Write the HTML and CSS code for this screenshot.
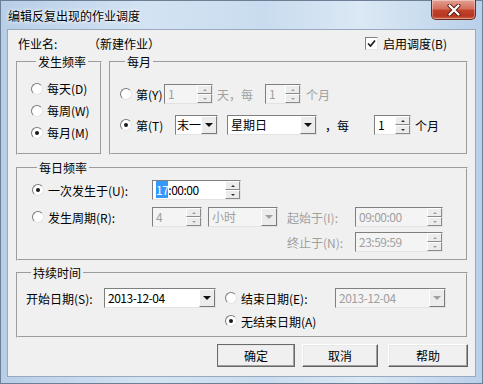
FILE: index.html
```html
<!DOCTYPE html>
<html lang="zh-CN">
<head>
    <meta charset="UTF-8">
    <meta name="viewport" content="width=device-width, initial-scale=1.0">
    <title>编辑反复出现的作业调度</title>
    <link rel="stylesheet" href="styles.css">
</head>
<body>
    <div class="window">
        <div class="titlebar">
            <span class="title">编辑反复出现的作业调度</span>
            <div class="close-btn">
                <svg width="14" height="12" viewBox="0 0 14 12">
                    <path d="M2.5 1.5 L11.5 10.5 M11.5 1.5 L2.5 10.5" stroke="#5a1d14" stroke-width="4" stroke-linecap="round"/>
                    <path d="M2.5 1.5 L11.5 10.5 M11.5 1.5 L2.5 10.5" stroke="#ffffff" stroke-width="2.2" stroke-linecap="round"/>
                </svg>
            </div>
        </div>

        <div class="client">
            <div class="job-row">
                <span class="job-label">作业名:</span>
                <span class="job-name">（新建作业）</span>
                <span class="checkbox">
                    <svg width="11" height="11" viewBox="0 0 11 11"><path d="M2 5.5 L4.5 8 L9 2.5" fill="none" stroke="#1c1c1c" stroke-width="1.7"/></svg>
                </span>
                <span>启用调度(B)</span>
            </div>

            <div class="freq-row">
                <fieldset class="group group-freq">
                    <legend>发生频率</legend>
                    <div class="option"><span class="radio"></span>每天(D)</div>
                    <div class="option"><span class="radio"></span>每周(W)</div>
                    <div class="option"><span class="radio checked"></span>每月(M)</div>
                </fieldset>

                <fieldset class="group group-month">
                    <legend>每月</legend>
                    <div class="row month-row-1">
                        <span class="radio"></span>
                        <span class="lbl w-28">第(Y)</span>
                        <div class="spin disabled w-49"><span class="value">1</span><span class="arrows"><i></i><i></i></span></div>
                        <span class="lbl muted ml-4 w-48">天，每</span>
                        <div class="spin disabled w-36"><span class="value">1</span><span class="arrows"><i></i><i></i></span></div>
                        <span class="lbl muted ml-5">个月</span>
                    </div>
                    <div class="row month-row-2">
                        <span class="radio checked"></span>
                        <span class="lbl w-39">第(T)</span>
                        <div class="combo tight w-43"><span class="value">末一</span><span class="drop"></span></div>
                        <div class="combo ml-9 w-90"><span class="value">星期日</span><span class="drop"></span></div>
                        <span class="lbl ml-8 w-49">，每</span>
                        <div class="spin w-37"><span class="value">1</span><span class="arrows"><i></i><i></i></span></div>
                        <span class="lbl ml-4">个月</span>
                    </div>
                </fieldset>
            </div>

            <fieldset class="group group-daily">
                <legend>每日频率</legend>
                <div class="row daily-row-1">
                    <span class="radio checked"></span>
                    <span class="lbl w-104">一次发生于(U):</span>
                    <div class="spin w-89"><span class="value num"><span class="sel">17</span>:00:00</span><span class="arrows"><i></i><i></i></span></div>
                </div>
                <div class="row daily-row-2">
                    <span class="radio"></span>
                    <span class="lbl w-104">发生周期(R):</span>
                    <div class="spin disabled w-50"><span class="value">4</span><span class="arrows"><i></i><i></i></span></div>
                    <div class="combo disabled ml-6 w-70"><span class="value">小时</span><span class="drop"></span></div>
                    <span class="lbl muted ml-9 w-68">起始于(I):</span>
                    <div class="spin disabled w-88"><span class="value num">09:00:00</span><span class="arrows"><i></i><i></i></span></div>
                </div>
                <div class="row daily-row-3">
                    <span class="lbl muted w-68">终止于(N):</span>
                    <div class="spin disabled w-88"><span class="value num">23:59:59</span><span class="arrows"><i></i><i></i></span></div>
                </div>
            </fieldset>

            <fieldset class="group group-duration">
                <legend>持续时间</legend>
                <div class="row duration-row-1">
                    <span class="lbl w-78">开始日期(S):</span>
                    <div class="combo w-112"><span class="value num">2013-12-04</span><span class="drop"></span></div>
                    <span class="radio ml-9"></span>
                    <span class="lbl w-94">结束日期(E):</span>
                    <div class="combo disabled w-111"><span class="value num">2013-12-04</span><span class="drop"></span></div>
                </div>
                <div class="row duration-row-2">
                    <span class="radio checked"></span>
                    <span class="lbl">无结束日期(A)</span>
                </div>
            </fieldset>

            <div class="buttons">
                <button class="btn btn-default w-78">确定</button>
                <button class="btn ml-7 w-76">取消</button>
                <button class="btn ml-10 w-80">帮助</button>
            </div>
        </div>
    </div>
</body>
</html>
```

FILE: styles.css
```css
body {
    margin: 0;
    font-family: "Noto Sans CJK SC", "Noto Sans", sans-serif;
    font-size: 12px;
    line-height: 17px;
    color: #000;
    background: #fff;
}
.window {
    width: 483px;
    height: 384px;
    box-sizing: border-box;
    border: 1px solid #6c7f95;
    padding: 0 6px 6px;
    display: flex;
    flex-direction: column;
    background: linear-gradient(to right, #b7cee7 0%, #d3e3f3 30%, #c9dcef 55%, #dbe8f5 75%, #b9d0e9 100%);
}
.titlebar {
    height: 28px;
    flex: none;
    display: flex;
    align-items: center;
}
.title {
    padding-left: 1px;
    font-size: 12px;
    text-shadow: 0 0 5px #fff, 0 0 3px #fff;
}
.close-btn {
    margin-left: auto;
    margin-top: -1px;
    align-self: flex-start;
    width: 45px;
    height: 20px;
    box-sizing: border-box;
    border: 1px solid #6a2a20;
    border-top: none;
    border-radius: 0 0 5px 5px;
    background: linear-gradient(#e3a194 0%, #d5705d 45%, #c2412b 55%, #b8361f 85%, #d26a4f 100%);
    box-shadow: inset 0 0 0 1px rgba(255, 255, 255, 0.35);
    display: flex;
    align-items: center;
    justify-content: center;
}
.client {
    height: 348px;
    flex: none;
    box-sizing: border-box;
    border: 1px solid #99aabe;
    background: #f0f0f0;
    padding: 0 7px 0 8px;
}

/* top line */
.job-row {
    display: flex;
    align-items: center;
    height: 17px;
    padding: 5px 0 0 2px;
}
.job-label {
    width: 70px;
}
.job-name {
    width: 277px;
}
.checkbox {
    width: 13px;
    height: 13px;
    box-sizing: border-box;
    border: 1px solid;
    border-color: #808080 #e6e6e6 #e6e6e6 #808080;
    background: #fff;
    margin-right: 5px;
    display: flex;
    align-items: center;
    justify-content: center;
}

/* group boxes */
.group {
    margin: 0;
    box-sizing: border-box;
    border: 2px groove #f0f0f0;
    min-width: 0;
    padding: 0;
}
.group legend {
    margin-left: 5px;
    padding: 0 2px;
    line-height: 16px;
}
.freq-row {
    display: flex;
    gap: 7px;
    margin-top: 2px;
}
.group-freq {
    width: 86px;
    height: 101px;
    padding: 10px 0 0 13px;
    display: flex;
    flex-direction: column;
    gap: 5px;
}
.group-month {
    width: 359px;
    height: 101px;
    padding: 14px 0 0 9px;
}
.group-daily {
    height: 101px;
    margin-top: 5px;
    padding: 4px 0 0 14px;
}
.group-duration {
    height: 73px;
    margin-top: 4px;
    padding: 7px 0 0 8px;
}

.option {
    display: flex;
    align-items: center;
    height: 17px;
    white-space: nowrap;
}
.row {
    display: flex;
    align-items: center;
    height: 20px;
    white-space: nowrap;
}
.month-row-2 {
    margin-top: 11px;
}
.daily-row-2 {
    margin-top: 7px;
}
.daily-row-3 {
    margin-top: 5px;
    margin-left: 255px;
}
.duration-row-2 {
    margin-top: 3px;
    margin-left: 199px;
}

.radio {
    width: 12px;
    height: 12px;
    flex: none;
    box-sizing: border-box;
    border-radius: 50%;
    border: 1px solid;
    border-color: #7a7a7a #e4e4e4 #e4e4e4 #7a7a7a;
    background: #fff;
    margin-right: 4px;
    display: flex;
    align-items: center;
    justify-content: center;
}
.radio.checked::after {
    content: "";
    width: 4px;
    height: 4px;
    border-radius: 50%;
    background: #1a1a1a;
}

.lbl {
    flex: none;
}
.muted {
    color: #a0a0a0;
}

/* spin and combo boxes */
.spin, .combo {
    height: 20px;
    flex: none;
    box-sizing: border-box;
    border: 1px solid;
    border-color: #7f7f7f #e3e3e3 #e3e3e3 #7f7f7f;
    background: #fff;
    display: flex;
}
.spin .value, .combo .value {
    flex: 1;
    padding-left: 3px;
    line-height: 18px;
    overflow: hidden;
}
.combo.tight .value {
    padding-left: 1px;
}
.value.num {
    letter-spacing: -0.5px;
}
.spin.disabled, .combo.disabled {
    background: #f4f4f4;
    color: #a0a0a0;
}
.sel {
    background: #3399ff;
    color: #fff;
}
.arrows {
    width: 15px;
    display: flex;
    flex-direction: column;
    flex: none;
}
.arrows i {
    flex: 1;
    box-sizing: border-box;
    border: 1px solid;
    border-color: #fff #8a8a8a #8a8a8a #fff;
    background: #ececec;
    display: flex;
    align-items: center;
    justify-content: center;
}
.arrows i::after {
    content: "";
    border-left: 2px solid transparent;
    border-right: 2px solid transparent;
    border-bottom: 2px solid #333;
}
.arrows i + i::after {
    border-bottom: 0;
    border-top: 2px solid #333;
}
.disabled .arrows i::after {
    border-bottom-color: #a0a0a0;
}
.disabled .arrows i + i::after {
    border-top-color: #a0a0a0;
}
.drop {
    width: 16px;
    flex: none;
    box-sizing: border-box;
    border: 1px solid;
    border-color: #fff #7a7a7a #7a7a7a #fff;
    background: #ececec;
    display: flex;
    align-items: center;
    justify-content: center;
}
.drop::after {
    content: "";
    border-left: 4px solid transparent;
    border-right: 4px solid transparent;
    border-top: 4px solid #111;
}
.disabled .drop::after {
    border-top-color: #a0a0a0;
}

/* buttons */
.buttons {
    display: flex;
    justify-content: flex-end;
    margin-top: 6px;
}
.btn {
    height: 23px;
    box-sizing: border-box;
    font: inherit;
    color: #000;
    padding: 0;
    border: 1px solid;
    border-color: #fff #5f5f5f #5f5f5f #fff;
    box-shadow: inset -1px -1px #a0a0a0, inset 1px 1px #e8e8e8;
    background: #f0f0f0;
}
.btn-default {
    outline: 1px solid #6a6a6a;
    outline-offset: -1px;
}

/* widths and spacings */
.w-28 { width: 28px; }
.w-36 { width: 36px; }
.w-37 { width: 37px; }
.w-39 { width: 39px; }
.w-43 { width: 43px; }
.w-48 { width: 48px; }
.w-49 { width: 49px; }
.w-50 { width: 50px; }
.w-68 { width: 68px; }
.w-70 { width: 70px; }
.w-76 { width: 76px; }
.w-78 { width: 78px; }
.w-80 { width: 80px; }
.w-88 { width: 88px; }
.w-89 { width: 89px; }
.w-90 { width: 90px; }
.w-94 { width: 94px; }
.w-104 { width: 104px; }
.w-111 { width: 111px; }
.w-112 { width: 112px; }
.ml-4 { margin-left: 4px; }
.ml-5 { margin-left: 5px; }
.ml-6 { margin-left: 6px; }
.ml-7 { margin-left: 7px; }
.ml-8 { margin-left: 8px; }
.ml-9 { margin-left: 9px; }
.ml-10 { margin-left: 10px; }
```
